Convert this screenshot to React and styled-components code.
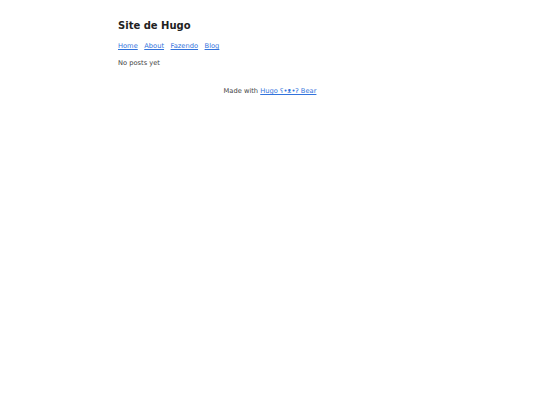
import React from 'react';
import styled, { createGlobalStyle } from 'styled-components';

const GlobalStyle = createGlobalStyle`
  html, body {
    margin: 0;
    background: #fff;
  }
  body {
    font-family: "DejaVu Sans", Verdana, sans-serif;
    font-size: 6.7px;
    line-height: 1.5;
    color: #444;
  }
`;

const Page = styled.div`
  max-width: 304px;
  margin: 0 auto;
  padding: 13px 0;
`;

const Header = styled.header`
  display: flex;
  flex-direction: column;
`;

const Title = styled.h2`
  margin: 4.5px 0 0;
  font-size: 10px;
  line-height: 1.5;
  color: #222;
  font-weight: bold;
`;

const Nav = styled.nav`
  display: flex;
  gap: 6.5px;
  margin: 8.5px 0 0;
`;

const NavLink = styled.a`
  color: #3273dc;
  text-decoration: underline;
`;

const Main = styled.main`
  margin-top: 7px;
`;

const Empty = styled.p`
  margin: 0;
`;

const Footer = styled.footer`
  margin-top: 18px;
  text-align: center;
`;

const FooterLink = styled.a`
  color: #3273dc;
  text-decoration: underline;
`;

const links = ['Home', 'About', 'Fazendo', 'Blog'];

export default function App() {
  return (
    <>
      <GlobalStyle />
      <Page>
        <Header>
          <Title>Site de Hugo</Title>
          <Nav>
            {links.map(l => (
              <NavLink key={l} href="#">{l}</NavLink>
            ))}
          </Nav>
        </Header>
        <Main>
          <Empty>No posts yet</Empty>
        </Main>
        <Footer>
          Made with <FooterLink href="#">Hugo ʕ•ᴥ•ʔ Bear</FooterLink>
        </Footer>
      </Page>
    </>
  );
}
